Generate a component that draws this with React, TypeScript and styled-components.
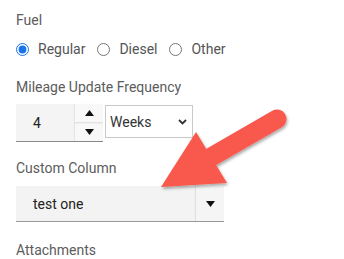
import React from 'react'
import styled, { createGlobalStyle } from 'styled-components'

const Global = createGlobalStyle`
  html, body {
    margin: 0;
    background: #fff;
  }
  body {
    font-family: Roboto, "Liberation Sans", sans-serif;
    font-size: 14px;
    color: #555;
  }
`

const Page = styled.div`
  position: relative;
  width: 344px;
  height: 259px;
  overflow: hidden;
  padding: 10px 16px 0;
  box-sizing: border-box;
`

const Label = styled.div`
  line-height: 20px;
  color: #5c5c5c;
`

const Section = styled.div<{ gap: number; after: number }>`
  display: flex;
  flex-direction: column;
  gap: ${p => p.gap}px;
  margin-bottom: ${p => p.after}px;
`

const RadioRow = styled.div`
  display: flex;
  align-items: center;
  height: 20px;
`

const RadioOption = styled.label`
  display: flex;
  align-items: center;
  gap: 9px;
  margin-right: 12px;
  color: #555;
  line-height: 20px;
`

const Radio = styled.input`
  margin: 0;
  width: 13px;
  height: 13px;
  accent-color: #1a73e8;
`

const InputRow = styled.div`
  display: flex;
  align-items: flex-start;
  gap: 2px;
`

const NumberBox = styled.div`
  display: flex;
  height: 37px;
  background: #f4f4f4;
  border-bottom: 1px solid #8a8a8a;
`

const NumberValue = styled.div`
  width: 59px;
  box-sizing: border-box;
  padding-left: 17px;
  display: flex;
  align-items: center;
  color: #222;
`

const Spinner = styled.div`
  width: 28px;
  display: flex;
  flex-direction: column;
  background: #f8f8f8;
  box-shadow: -1px 0 1px rgba(0, 0, 0, 0.06);
`

const SpinButton = styled.div<{ down?: boolean }>`
  flex: 1;
  display: flex;
  align-items: center;
  justify-content: center;
  border-top: ${p => (p.down ? '1px solid #e2e2e2' : 'none')};
  box-shadow: ${p => (p.down ? 'inset 0 1px 1px rgba(0,0,0,0.04)' : 'none')};
`

const Unit = styled.div`
  width: 88px;
  height: 33px;
  margin-top: 1px;
  box-sizing: border-box;
  border: 1px solid #c9c9c9;
  display: flex;
  align-items: center;
  justify-content: space-between;
  padding: 0 5px 0 4px;
  color: #333;
  background: #fff;
`

const Dropdown = styled.div`
  width: 208px;
  height: 35px;
  display: flex;
  background: #f3f3f3;
  border-bottom: 1px solid #9a9a9a;
`

const DropdownValue = styled.div`
  flex: 1;
  display: flex;
  align-items: center;
  padding-left: 17px;
  color: #222;
`

const DropdownButton = styled.div`
  width: 28px;
  display: flex;
  align-items: center;
  justify-content: center;
  background: #f5f5f5;
  box-shadow: -1px 0 1px rgba(0, 0, 0, 0.08);
`

const Callout = styled.svg`
  position: absolute;
  left: 0;
  top: 0;
  pointer-events: none;
`

const Tri = ({ down }: { down?: boolean }) => (
  <svg width="9" height="6" viewBox="0 0 9 6">
    <path d={down ? 'M0 0h9L4.5 6z' : 'M0 6h9L4.5 0z'} fill="#111" />
  </svg>
)

const Chevron = () => (
  <svg width="9" height="6" viewBox="0 0 9 6">
    <path d="M1 1l3.5 3.5L8 1" fill="none" stroke="#333" strokeWidth="1.8" />
  </svg>
)

export default function App() {
  return (
    <>
      <Global />
      <Page>
        <Section gap={9} after={18}>
          <Label>Fuel</Label>
          <RadioRow>
            <RadioOption>
              <Radio type="radio" name="fuel" defaultChecked />
              Regular
            </RadioOption>
            <RadioOption>
              <Radio type="radio" name="fuel" />
              Diesel
            </RadioOption>
            <RadioOption>
              <Radio type="radio" name="fuel" />
              Other
            </RadioOption>
          </RadioRow>
        </Section>

        <Section gap={7} after={16}>
          <Label>Mileage Update Frequency</Label>
          <InputRow>
            <NumberBox>
              <NumberValue>4</NumberValue>
              <Spinner>
                <SpinButton>
                  <Tri />
                </SpinButton>
                <SpinButton down>
                  <Tri down />
                </SpinButton>
              </Spinner>
            </NumberBox>
            <Unit>
              Weeks
              <Chevron />
            </Unit>
          </InputRow>
        </Section>

        <Section gap={8} after={18}>
          <Label>Custom Column</Label>
          <Dropdown>
            <DropdownValue>test one</DropdownValue>
            <DropdownButton>
              <Tri down />
            </DropdownButton>
          </Dropdown>
        </Section>

        <Label>Attachments</Label>

        <Callout width="344" height="259" viewBox="0 0 344 259">
          <defs>
            <filter id="shadow" x="-20%" y="-20%" width="140%" height="140%">
              <feDropShadow dx="1" dy="2" stdDeviation="1.5" floodColor="#000" floodOpacity="0.35" />
            </filter>
          </defs>
          <g filter="url(#shadow)" fill="#f9594d">
            <line x1="277" y1="119" x2="206" y2="160" stroke="#f9594d" strokeWidth="19" strokeLinecap="round" />
            <polygon points="161,187 196,132 227,183" />
          </g>
        </Callout>
      </Page>
    </>
  )
}
